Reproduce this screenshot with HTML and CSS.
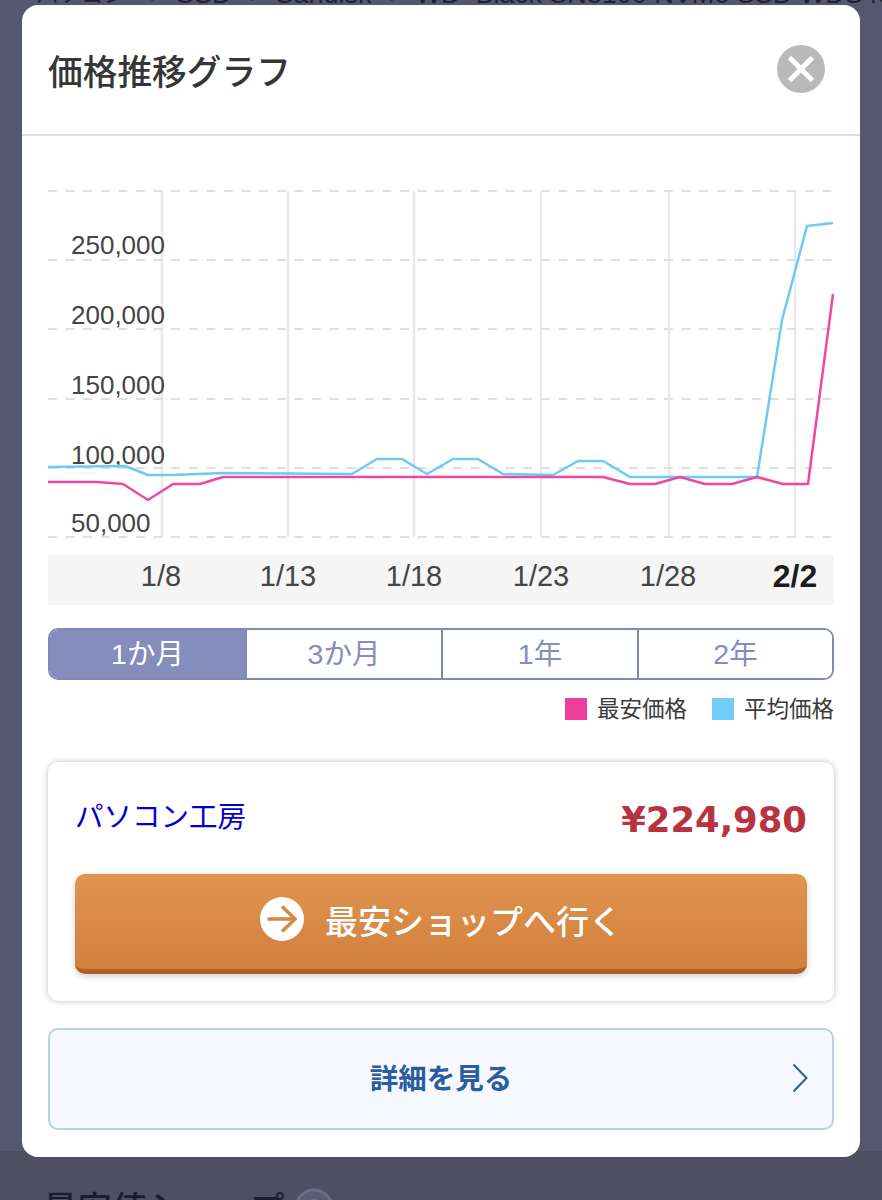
FILE: index.html
```html
<!DOCTYPE html>
<html lang="ja">
<head>
<meta charset="utf-8">
<title>価格推移グラフ</title>
<link rel="stylesheet" href="styles.css">
</head>
<body>
<div class="page">
  <nav class="crumbs">
    <span class="crumb-jp">パソコン</span><span class="sep">›</span><span>SSD</span><span class="sep">›</span><span>Sandisk</span><span class="sep">›</span><span>WD_Black SN8100 NVMe SSD WDS400</span>
  </nav>
  <section class="modal">
    <header class="modal-head">
      <h1 class="modal-title">価格推移グラフ</h1>
      <button class="close" aria-label="閉じる">
        <svg class="close-icon" viewBox="0 0 48 48"><circle cx="24" cy="24" r="24" fill="#b9b9b9"/><path d="M12.500 12.500 35.500 35.500M35.500 12.500 12.500 35.500" stroke="#fff" stroke-width="5" fill="none"/></svg>
      </button>
    </header>
    <div class="modal-body">
      <svg class="chart" viewBox="48 190 786 415" width="786" height="415">
        <g class="grid-v">
          <path d="M162 191V537M288 191V537M414 191V537M541 191V537M669 191V537M795 191V537"/>
        </g>
        <g class="grid-h">
          <path d="M48 191H834M48 260H834M48 329H834M48 399H834M48 468H834M48 537H834"/>
        </g>
        <g class="y-labels">
          <text x="71" y="254">250,000</text>
          <text x="71" y="324">200,000</text>
          <text x="71" y="394">150,000</text>
          <text x="71" y="464">100,000</text>
          <text x="71" y="532">50,000</text>
        </g>
        <rect class="x-band" x="48" y="554" width="786" height="51"/>
        <g class="x-labels">
          <text x="161" y="586">1/8</text>
          <text x="288" y="586">1/13</text>
          <text x="414" y="586">1/18</text>
          <text x="541" y="586">1/23</text>
          <text x="668" y="586">1/28</text>
          <text class="x-today" x="795" y="587">2/2</text>
        </g>
        <polyline class="line-avg" points="48,467 125,466 148,475 172,475 223,473 352,474 377,459 402,459 427,474 453,459 478,459 503,474 553,475 578,461 603,461 630,477 757,477 782,320 807,226 833,223"/>
        <polyline class="line-min" points="48,482 98,482 123,484 148,500 173,484 200,484 223,477 603,477 630,484 655,484 680,477 705,484 732,484 757,477 783,484 808,484 833,294"/>
      </svg>
      <div class="tabs">
        <button class="tab tab-active">1か月</button>
        <button class="tab">3か月</button>
        <button class="tab">1年</button>
        <button class="tab">2年</button>
      </div>
      <div class="legend">
        <span class="legend-item"><i class="swatch swatch-min"></i>最安価格</span>
        <span class="legend-item"><i class="swatch swatch-avg"></i>平均価格</span>
      </div>
      <div class="card">
        <div class="card-row">
          <a class="shop" href="#">パソコン工房</a>
          <span class="price">¥224,980</span>
        </div>
        <a class="cta" href="#">
          <svg class="cta-icon" viewBox="0 0 44 44"><circle cx="22" cy="22" r="22" fill="#fff"/><path d="M7.500 22H34.500M22 9.500 35 22 22 34.500" stroke="#d88843" stroke-width="3.500" fill="none"/></svg>
          <span class="cta-label">最安ショップへ行く</span>
        </a>
      </div>
      <a class="detail" href="#">
        <span class="detail-label">詳細を見る</span>
        <svg class="chevron" viewBox="0 0 16 30"><path d="M1.500 1.500 14.500 15 1.500 28.500" stroke="#2b5c9e" stroke-width="2" fill="none"/></svg>
      </a>
    </div>
  </section>
  <div class="below">
    <h2 class="below-title">最安値ショップ</h2>
    <svg class="help" viewBox="0 0 40 40"><circle cx="20" cy="20" r="18" fill="#5b5c74" stroke="#6c6e88" stroke-width="3"/><circle cx="20" cy="20" r="9" fill="#73758f"/></svg>
  </div>
</div>
</body>
</html>
```
FILE: styles.css
```css
* { box-sizing: border-box; }
html, body { margin: 0; padding: 0; }
body {
  font-family: "Liberation Sans", "Noto Sans CJK JP", sans-serif;
  color: #333;
}
.page {
  height: 1200px;
  overflow: hidden;
  background: linear-gradient(#55566f 1151px, #504e62 1151px);
}
.crumbs {
  height: 5px;
  overflow: hidden;
  display: flex;
  align-items: flex-end;
  gap: 17.500px;
  padding-left: 36px;
  white-space: nowrap;
  font-size: 27px;
  line-height: 21px;
  color: #1e1f38;
}
.crumbs span { flex: none; }
.crumbs .crumb-jp { font-size: 22.500px; margin-right: 6px; }
.sep { color: #3a3b55; }
.modal {
  margin: 0 22px;
  height: 1152px;
  background: #fff;
  border-radius: 16px;
}
.modal-head {
  height: 131px;
  border-bottom: 2px solid #dedede;
  display: flex;
  align-items: flex-start;
  justify-content: space-between;
  padding: 0 35px 0 26px;
}
.modal-title {
  margin: 45px 0 0;
  font-size: 34.700px;
  line-height: 46px;
  font-weight: 500;
  color: #363636;
}
.close {
  margin-top: 40px;
  padding: 0;
  border: 0;
  background: none;
  width: 48px;
  height: 48px;
  display: block;
}
.close-icon { display: block; width: 48px; height: 48px; }
.modal-body { padding: 54px 26px 27px; }
.chart { display: block; }
.grid-v path { stroke: #e9e9e9; stroke-width: 2.500; fill: none; }
.grid-h path { stroke: #dfdfdf; stroke-width: 2; stroke-dasharray: 9 8.600; fill: none; }
.y-labels text { font-size: 26px; fill: #444; }
.x-band { fill: #f5f5f5; }
.x-labels text { font-size: 29px; fill: #444; text-anchor: middle; }
.x-labels .x-today { font-size: 32px; font-weight: 700; fill: #1c1c1c; }
.line-avg, .line-min { fill: none; stroke-width: 2.500; stroke-linejoin: round; }
.line-avg { stroke: #6ccbf6; }
.line-min { stroke: #ea4aa0; }
.tabs {
  margin-top: 23px;
  height: 52px;
  display: grid;
  grid-template-columns: 195px 196px 196px 1fr;
  border: 2px solid #8289b8;
  border-radius: 10px;
  overflow: hidden;
}
.tab {
  border: 0;
  border-left: 2px solid #8289b8;
  background: #fff;
  color: #858dbc;
  font: inherit;
  font-size: 28.500px;
  line-height: 48px;
  padding: 0 0 1px;
}
.tab:first-child { border-left: 0; }
.tab-active { background: #858dbc; color: #fff; }
.legend {
  margin-top: 17px;
  height: 26px;
  display: flex;
  justify-content: flex-end;
  gap: 25px;
  font-size: 22.500px;
  line-height: 26px;
  color: #3a3a3a;
}
.legend-item { display: flex; align-items: center; gap: 10px; }
.swatch { display: block; width: 22px; height: 22px; margin-top: -2px; }
.swatch-min { background: #ec3f9b; }
.swatch-avg { background: #72cdfb; }
.card {
  margin-top: 39px;
  height: 239px;
  padding: 0 27px;
  background: #fff;
  border-radius: 10px;
  box-shadow: 0 0 6px rgba(0, 0, 0, .25);
}
.card-row {
  height: 112px;
  display: flex;
  justify-content: space-between;
  align-items: center;
  padding-bottom: 2px;
}
.shop {
  font-size: 28.500px;
  line-height: 40px;
  color: #0000d0;
  text-decoration: none;
}
.price {
  margin-top: 5px;
  font-family: "DejaVu Sans", sans-serif;
  font-weight: 700;
  font-size: 35.400px;
  line-height: 40px;
  color: #b8323f;
}
.cta {
  height: 100px;
  display: flex;
  align-items: center;
  justify-content: center;
  gap: 21px;
  padding-bottom: 5px;
  border-bottom: 5px solid #a9622c;
  border-radius: 10px;
  background: linear-gradient(#df954f, #d27f3d);
  box-shadow: 0 2px 6px rgba(0, 0, 0, .2);
  color: #fff;
  font-size: 33px;
  font-weight: 500;
  text-decoration: none;
}
.cta-label { padding-top: 2px; }
.cta-icon { display: block; width: 44px; height: 44px; }
.detail {
  position: relative;
  margin-top: 27px;
  height: 102px;
  display: flex;
  align-items: center;
  justify-content: center;
  padding-bottom: 6px;
  border: 2px solid #b8d0ea;
  border-radius: 10px;
  background: #f5f9fe;
  text-decoration: none;
}
.detail-label {
  font-size: 28.500px;
  font-weight: 700;
  color: #2b5c9e;
}
.chevron {
  position: absolute;
  right: 24px;
  top: 33px;
  width: 16px;
  height: 30px;
}
.below {
  display: flex;
  align-items: flex-start;
  gap: 9px;
  padding: 31px 0 0 43px;
}
.below-title {
  margin: -2px 0 0;
  font-size: 34.500px;
  line-height: 46px;
  font-weight: 500;
  color: #1c1c30;
  white-space: nowrap;
}
.help { flex: none; width: 40px; height: 40px; }
```
